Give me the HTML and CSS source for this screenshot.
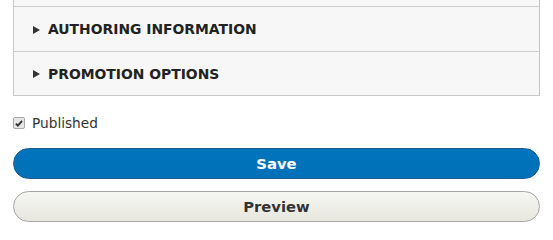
FILE: index.html
```html
<!DOCTYPE html>
<html lang="en">
<head>
<meta charset="utf-8">
<title>Node form</title>
<link rel="stylesheet" href="styles.css">
</head>
<body>
<form class="form">
  <div class="panel">
    <div class="panel-tail"></div>
    <details class="panel-item">
      <summary class="panel-summary"><span class="marker"></span>Authoring information</summary>
    </details>
    <details class="panel-item panel-item-last">
      <summary class="panel-summary"><span class="marker"></span>Promotion options</summary>
    </details>
  </div>
  <label class="check-row">
    <input type="checkbox" class="check" checked>
    <span class="check-label">Published</span>
  </label>
  <div class="actions">
    <button type="button" class="button button-primary">Save</button>
    <button type="button" class="button">Preview</button>
  </div>
</form>
</body>
</html>
```
FILE: styles.css
```css
html, body {
  margin: 0;
  padding: 0;
  background: #fff;
}
body {
  font-family: "DejaVu Sans", "Liberation Sans", sans-serif;
  color: #333;
  width: 553px;
  height: 237px;
  overflow: hidden;
}
.form {
  padding: 0 13px 0 13px;
  width: 527px;
}
.panel {
  border: 1px solid #c8c8c8;
  border-top: none;
  background: #f7f7f7;
}
.panel-tail {
  height: 6px;
  border-bottom: 1px solid #cccccc;
}
.panel-item {
  border-bottom: 1px solid #cccccc;
}
.panel-item-last {
  border-bottom: none;
}
.panel-summary {
  list-style: none;
  display: flex;
  align-items: center;
  height: 44px;
  padding-left: 19px;
  font-size: 13.9px;
  font-weight: bold;
  text-transform: uppercase;
  color: #222;
  cursor: pointer;
}
.panel-item-last .panel-summary {
  height: 43px;
}
.panel-summary::-webkit-details-marker {
  display: none;
}
.marker {
  display: inline-block;
  width: 0;
  height: 0;
  border-left: 7px solid #333;
  border-top: 4px solid transparent;
  border-bottom: 4px solid transparent;
  margin-right: 8px;
  margin-top: 1px;
}
.check-row {
  display: flex;
  align-items: center;
  height: 20px;
  margin-top: 17px;
  font-size: 13.7px;
  color: #333;
}
.check {
  appearance: none;
  -webkit-appearance: none;
  margin: 0 7px 0 0;
  width: 12px;
  height: 12px;
  border: 1px solid #a8a8a8;
  border-radius: 2px;
  background-color: #e6e6e6;
  background-image: url("data:image/svg+xml,%3Csvg xmlns='http://www.w3.org/2000/svg' viewBox='0 0 12 11'%3E%3Cpath d='M2.2 5.6 L4.6 8.2 L9.8 2.2' fill='none' stroke='%23303030' stroke-width='2.2'/%3E%3C/svg%3E");
  background-repeat: no-repeat;
  background-size: 10px 9px;
  background-position: center;
}
.actions {
  display: flex;
  flex-direction: column;
  gap: 12px;
  margin-top: 15px;
}
.button {
  display: block;
  width: 100%;
  height: 31px;
  margin: 0;
  padding: 0 1.5em;
  border: 1px solid #a6a6a6;
  border-radius: 20em;
  background: linear-gradient(to bottom, #f6f6f3, #e7e7df);
  font-family: "DejaVu Sans", "Liberation Sans", sans-serif;
  font-size: 14.8px;
  font-weight: bold;
  color: #333;
}
.button-primary {
  background: linear-gradient(to bottom, #0074bd, #0071b8);
  border-color: #1e5c90;
  color: #fff;
}
```
